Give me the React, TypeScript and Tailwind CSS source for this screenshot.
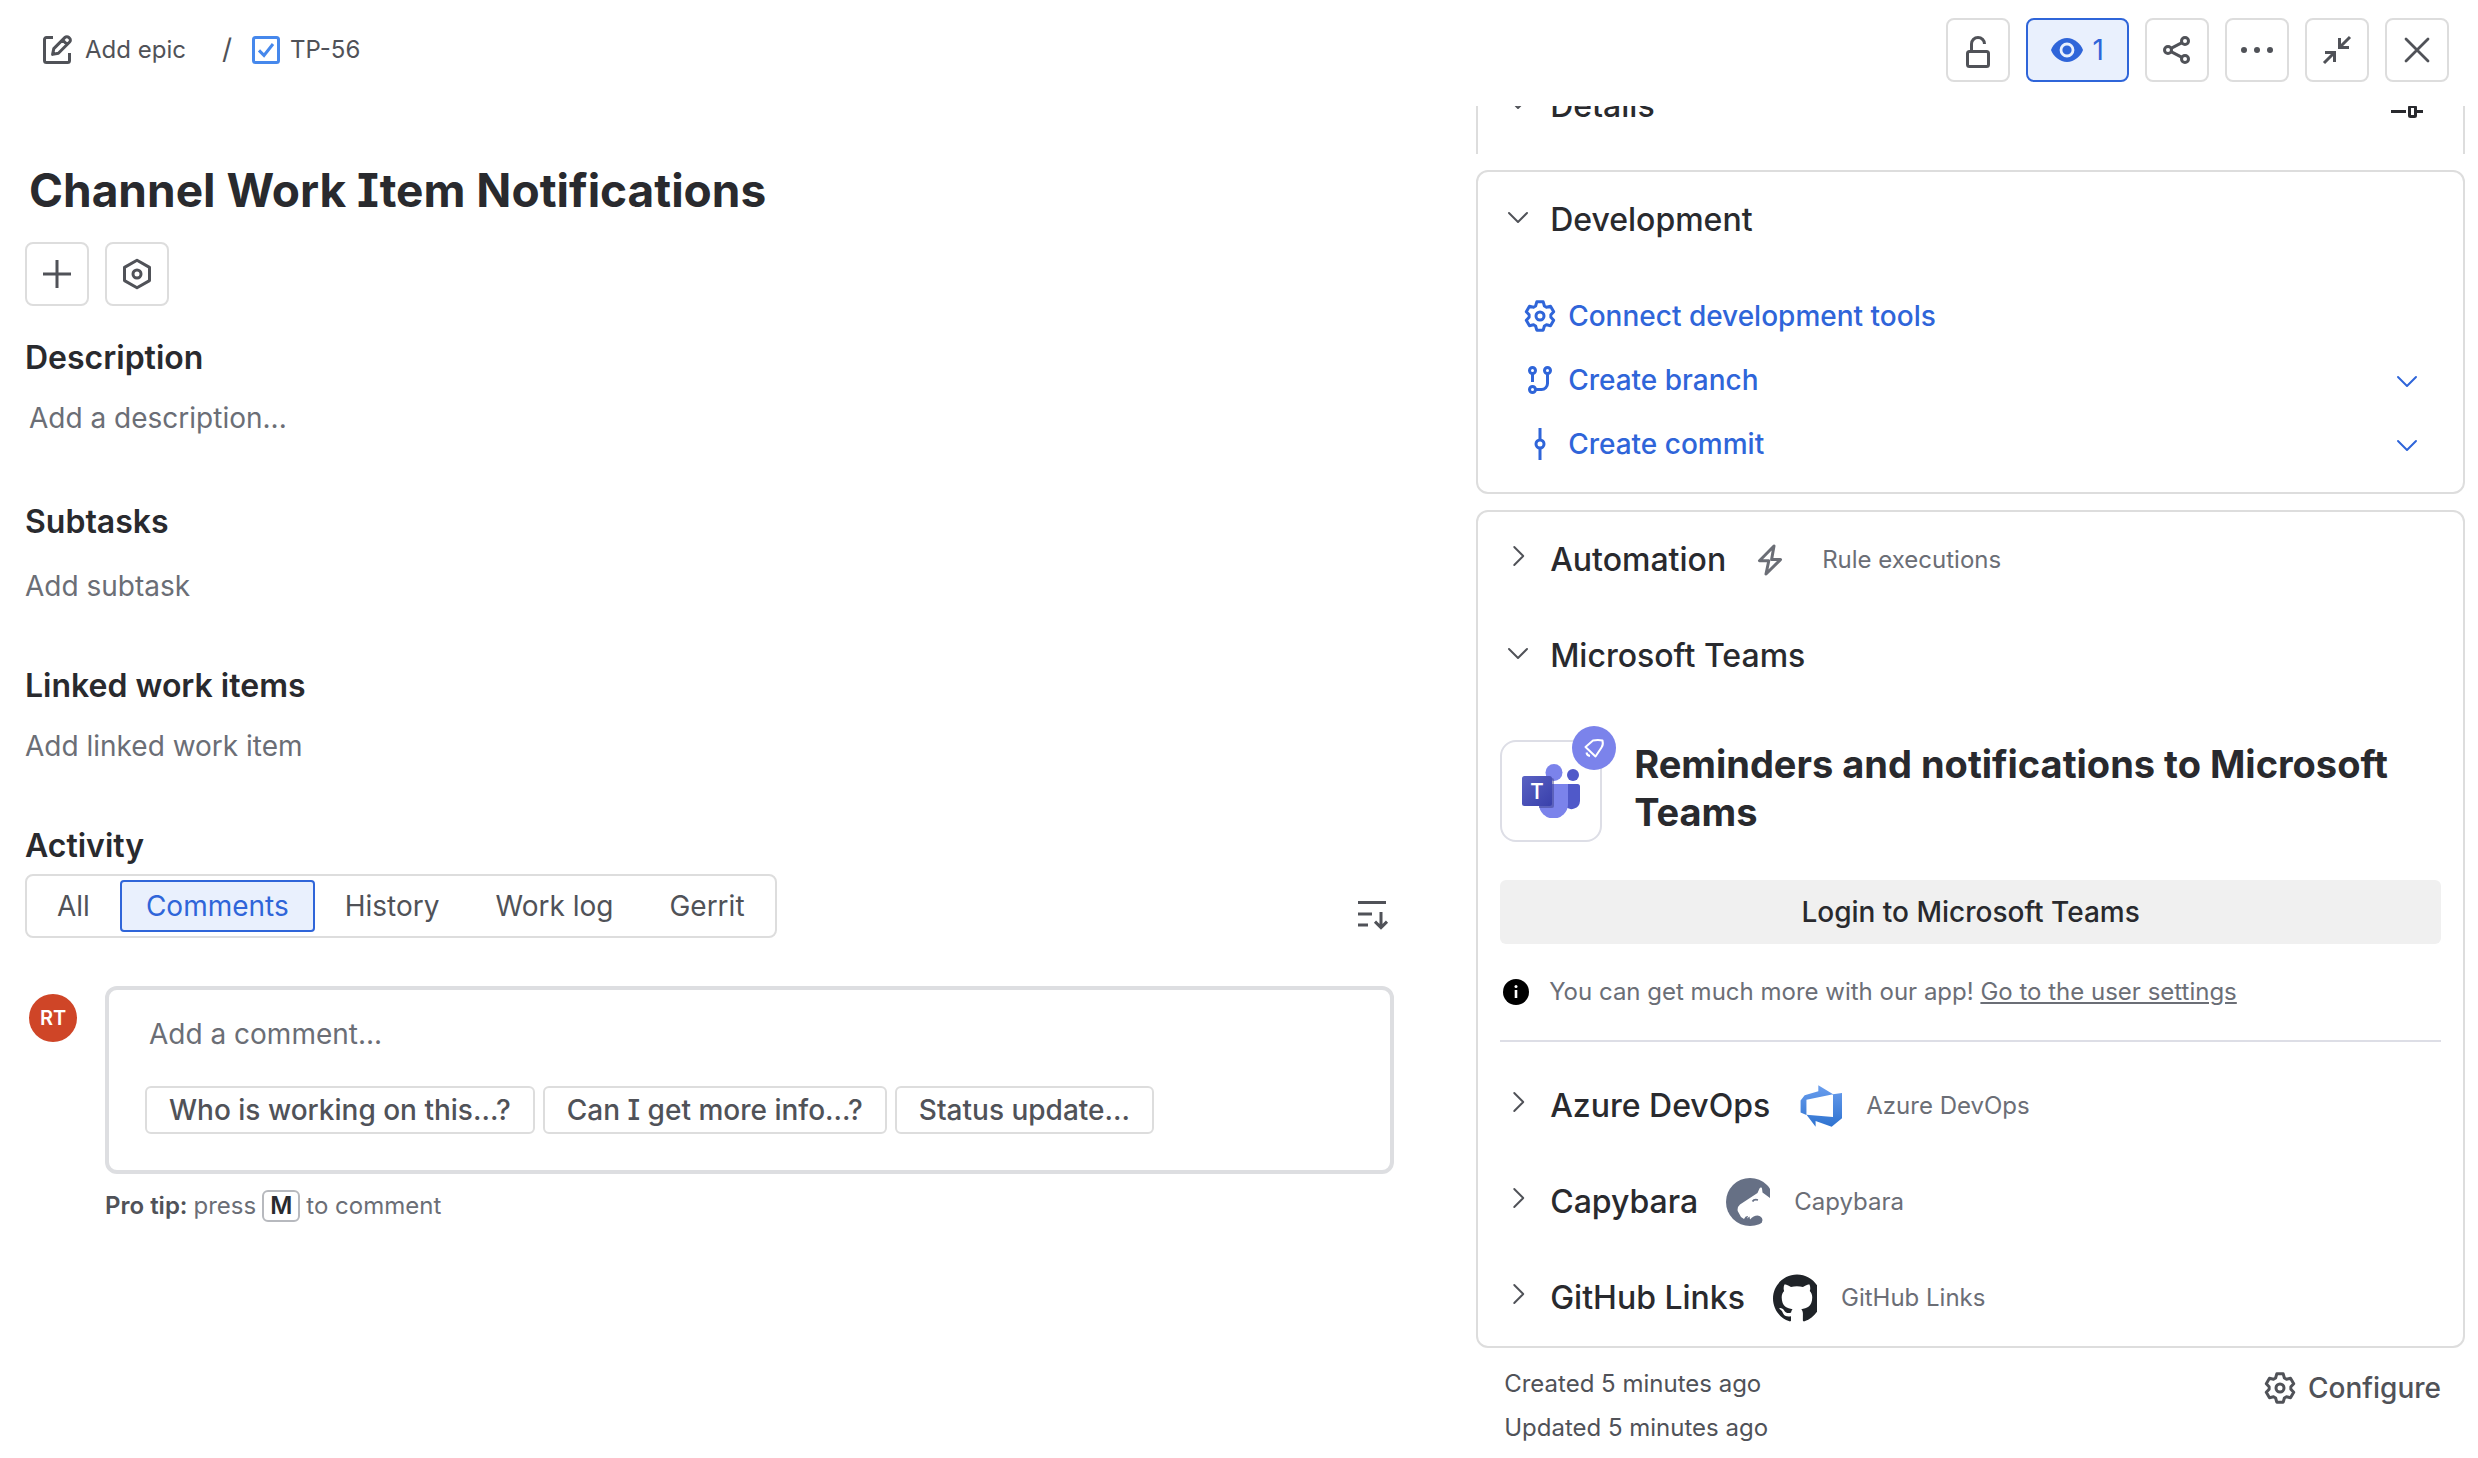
import React, { useState } from 'react';

interface IconProps {
  children: React.ReactNode;
  className?: string;
}

const Icon: React.FC<IconProps> = ({ children, className = 'size-8' }) => (
  <svg
    viewBox="0 0 16 16"
    fill="none"
    stroke="currentColor"
    strokeWidth="1.5"
    className={`shrink-0 overflow-visible ${className}`}
    aria-hidden="true"
  >
    {children}
  </svg>
);

const GearIcon = () => (
  <Icon>
    <path
      strokeLinejoin="round"
      d="M5.8 3L6.4.9h3.2l.6 2.1 1.03.6 2.03-.49 1.6 2.78-1.43 1.51v1.2l1.43 1.51-1.6 2.78-2.03-.49-1.03.6-.6 2.1H6.4L5.8 13l-1.03-.6-2.03.49-1.6-2.78L2.57 8.6V7.4L1.14 5.89l1.6-2.78 2.03.49z"
    />
    <circle cx="8" cy="8" r="2" />
  </Icon>
);

const ChevronDown = () => (
  <Icon className="size-6">
    <path d="M2 6l6 6 6-6" strokeWidth="1.3" strokeLinecap="round" strokeLinejoin="round" />
  </Icon>
);

const ChevronRight = () => (
  <Icon className="size-6">
    <path d="M5.5 2l6 6-6 6" strokeWidth="1.3" strokeLinecap="round" strokeLinejoin="round" />
  </Icon>
);

const TeamsLogo = () => (
  <svg viewBox="0 0 58 54" className="w-[58px]" aria-hidden="true">
    <defs>
      <linearGradient id="teams-tile" x1="0" y1="0" x2="1" y2="1">
        <stop offset="0" stopColor="#5a62c3" />
        <stop offset="1" stopColor="#3940ab" />
      </linearGradient>
    </defs>
    <circle cx="51" cy="11" r="6" fill="#5059c9" />
    <path d="M43 20h12.500a2.500 2.500 0 0 1 2.500 2.500V37a8.500 8.500 0 0 1-15 5z" fill="#5059c9" />
    <circle cx="32" cy="8.500" r="8.500" fill="#7b83eb" />
    <path d="M17 20h29v20a14.500 14.500 0 0 1-29 0z" fill="#7b83eb" />
    <path d="M17 14h13a2 2 0 0 1 2 2v26a2 2 0 0 1-2 2H17z" fill="#3b3f8c" opacity="0.5" />
    <rect y="12" width="30" height="30" rx="2.500" fill="url(#teams-tile)" />
    <text x="15" y="35" textAnchor="middle" fontSize="22" fontWeight="600" fill="#fff" fontFamily="Open Sans, sans-serif">
      T
    </text>
  </svg>
);

const AzureLogo = () => (
  <svg viewBox="0 0 17 18" className="h-12 w-11" aria-hidden="true">
    <defs>
      <linearGradient id="azure" x1="0" y1="0" x2="0" y2="1">
        <stop offset="0" stopColor="#6a9eee" />
        <stop offset="1" stopColor="#2f73d0" />
      </linearGradient>
    </defs>
    <path
      fill="url(#azure)"
      d="M17 4v9.740l-4 3.280-6.200-2.260V17l-3.510-4.590 10.230.8V4.440zm-3.410.49L7.850 1v2.290L2.580 4.840 1 6.870v4.610l2.260 1V6.570z"
    />
  </svg>
);

const CapybaraLogo = () => (
  <svg viewBox="0 0 44 48" className="h-12 w-11" aria-hidden="true">
    <circle cx="24" cy="24" r="24" fill="#667085" />
    <path
      fill="#fff"
      d="M48 22l-4-2-7.500-5.500L36 10.500c0-1.500-2-1.500-2.500 0L31.500 15 14 26.500q-3 2.500-2.300 6.500l3.300 6 3 2q1.500-3.500 4-3l-1 2.500 2.500-2 .5 3q3.500-4 7.500-4 4.500.5 5 4.500 0 3-3 5.500l14 3z"
    />
    <path d="M26.500 23.500q1.500-2.500 5.500-1.500" fill="none" stroke="#667085" strokeWidth="1.800" />
  </svg>
);

const GitHubLogo = () => (
  <svg viewBox="0 0 22 24" className="h-12 w-11" aria-hidden="true">
    <path
      fill="#1f2328"
      d="M12 .297c-6.630 0-12 5.373-12 12 0 5.303 3.438 9.800 8.205 11.385.6.113.82-.258.82-.577 0-.285-.01-1.040-.015-2.040-3.338.724-4.042-1.610-4.042-1.610C4.422 18.070 3.633 17.700 3.633 17.700c-1.087-.744.084-.729.084-.729 1.205.084 1.838 1.236 1.838 1.236 1.070 1.835 2.809 1.305 3.495.998.108-.776.417-1.305.76-1.605-2.665-.3-5.466-1.332-5.466-5.930 0-1.310.465-2.380 1.235-3.220-.135-.303-.54-1.523.105-3.176 0 0 1.005-.322 3.300 1.230.96-.267 1.980-.399 3-.405 1.020.006 2.040.138 3 .405 2.280-1.552 3.285-1.230 3.285-1.230.645 1.653.24 2.873.12 3.176.765.84 1.230 1.910 1.230 3.220 0 4.610-2.805 5.625-5.475 5.920.42.36.81 1.096.81 2.220 0 1.606-.015 2.896-.015 3.286 0 .315.21.69.825.57C20.565 22.092 24 17.592 24 12.297c0-6.627-5.373-12-12-12"
    />
  </svg>
);

interface IconButtonProps {
  label: string;
  children: React.ReactNode;
}

const IconButton: React.FC<IconButtonProps> = ({ label, children }) => (
  <button
    type="button"
    aria-label={label}
    className="flex size-16 items-center justify-center rounded-lg border-2 border-[#dddddd] text-[#505258]"
  >
    {children}
  </button>
);

interface PanelRowProps {
  title: string;
  open?: boolean;
  children?: React.ReactNode;
}

const PanelRow: React.FC<PanelRowProps> = ({ title, open = false, children }) => (
  <div className="flex h-24 shrink-0 items-center px-7">
    <button type="button" aria-expanded={open} className="flex items-center gap-5">
      <span className="pb-2 text-[#505258]">{open ? <ChevronDown /> : <ChevronRight />}</span>
      <span className="text-[32px] leading-10 font-medium">{title}</span>
    </button>
    {children}
  </div>
);

interface AppRowProps {
  title: string;
  label: string;
  icon: React.ReactNode;
}

const AppRow: React.FC<AppRowProps> = ({ title, label, icon }) => (
  <PanelRow title={title}>
    <span className="ml-7 flex w-11 shrink-0 text-[#6b6e76]">{icon}</span>
    <span className="ml-6 text-2xl text-[#6b6e76]">{label}</span>
  </PanelRow>
);

interface FieldProps {
  title: string;
  action: string;
  className: string;
  actionClassName?: string;
}

const Field: React.FC<FieldProps> = ({ title, action, className, actionClassName = '' }) => (
  <section className={`flex flex-col items-start ${className}`}>
    <h2 className="text-[32px] leading-10 font-semibold">{title}</h2>
    <button type="button" className={`text-[28px] leading-10 text-[#6b6e76] ${actionClassName}`}>
      {action}
    </button>
  </section>
);

const tabs = ['All', 'Comments', 'History', 'Work log', 'Gerrit'];
const suggestions = ['Who is working on this...?', 'Can I get more info...?', 'Status update...'];

const Header = () => (
  <header className="flex h-[106px] items-start justify-between pt-[18px] pr-[29px] pl-[41px]">
    <nav aria-label="Breadcrumbs" className="flex h-16 items-center text-2xl text-[#505258]">
      <button type="button" className="flex items-center gap-3">
        <Icon>
          <path d="M6 1.750H2.750a1 1 0 0 0-1 1v10.500a1 1 0 0 0 1 1h10.500a1 1 0 0 0 1-1V9.500" />
          <path
            strokeLinejoin="round"
            d="M5.800 10.200l.6-2.900L12 1.700a1.300 1.300 0 0 1 1.850 0l.45.45a1.300 1.300 0 0 1 0 1.850L8.700 9.600zM10.800 3l2.200 2.200"
          />
        </Icon>
        Add epic
      </button>
      <span className="ml-9 text-[28px]">/</span>
      <a href="#TP-56" className="ml-[18px] flex items-center gap-2">
        <Icon className="size-8 text-[#4688ec]">
          <rect x="1.750" y="1.750" width="12.500" height="12.500" rx="1" />
          <path d="M4.500 8.200l2.500 2.500L11.500 5" />
        </Icon>
        TP-56
      </a>
    </nav>
    <div className="flex gap-4">
      <IconButton label="Restrictions">
        <Icon>
          <rect x="2.750" y="8.750" width="10.500" height="7.500" rx="1" />
          <path d="M4.750 8.500V5a3.250 3.250 0 0 1 6.500 0" />
        </Icon>
      </IconButton>
      <button
        type="button"
        aria-label="Watching, 1 watcher"
        className="flex h-16 items-center gap-2.5 rounded-lg border-2 border-[#2f65d9] bg-[#e9f0fd] px-[23px] text-[28px] text-[#2f65d9]"
      >
        <Icon>
          <path d="M0 8C1 5 4.500 2 8 2s7 3 8 6c-1 3-4.500 6-8 6S1 11 0 8z" fill="currentColor" stroke="none" />
          <circle cx="8" cy="8" r="3" stroke="#e9f0fd" strokeWidth="1.400" />
        </Icon>
        1
      </button>
      <IconButton label="Share">
        <Icon>
          <circle cx="3.500" cy="8" r="1.750" />
          <circle cx="12" cy="3.500" r="1.750" />
          <circle cx="12" cy="12.500" r="1.750" />
          <path d="M5 7.200l5.500-2.900M5 8.800l5.500 2.900" />
        </Icon>
      </IconButton>
      <IconButton label="Actions">
        <Icon>
          <g fill="currentColor" stroke="none">
            <circle cx="1.500" cy="8" r="1.500" />
            <circle cx="8" cy="8" r="1.500" />
            <circle cx="14.500" cy="8" r="1.500" />
          </g>
        </Icon>
      </IconButton>
      <IconButton label="Collapse">
        <Icon>
          <path d="M14.500 1.500L9.250 6.750M9.250 2v4.750H14M1.500 14.500l5.250-5.250M2 9.250h4.750V14" />
        </Icon>
      </IconButton>
      <IconButton label="Close">
        <Icon>
          <path d="M2.500 2.500l11 11M13.500 2.500l-11 11" strokeLinecap="round" strokeWidth="1.400" />
        </Icon>
      </IconButton>
    </div>
  </header>
);

const Activity = () => {
  const [activeTab, setActiveTab] = useState('Comments');

  return (
    <section className="mt-15">
      <h2 className="text-[32px] leading-10 font-semibold">Activity</h2>
      <div className="mt-2 flex items-start justify-between">
        <div className="flex gap-1 rounded-lg border-2 border-[#dddddd] p-1">
          {tabs.map((tab) => (
            <button
              key={tab}
              type="button"
              aria-pressed={tab === activeTab}
              onClick={() => setActiveTab(tab)}
              className={`h-[52px] rounded-sm border-2 px-6 text-[28px] ${
                tab === activeTab
                  ? 'border-[#2f65d9] bg-[#e9f0fd] text-[#2f65d9]'
                  : 'border-transparent text-[#505258]'
              }`}
            >
              {tab}
            </button>
          ))}
        </div>
        <button type="button" aria-label="Newest first" className="mt-6 mr-1.5 text-[#505258]">
          <Icon>
            <path d="M1 2.250h14M1 8h7M1 13.500h5M12.500 7v7.500M9.500 11.800l3 3 3-3" />
          </Icon>
        </button>
      </div>

      <div className="mt-12 flex items-start">
        <div className="mt-2 ml-1 flex size-12 items-center justify-center rounded-full bg-[#cf4527] text-xl font-semibold text-white">
          RT
        </div>
        <div className="ml-7 flex-1">
          <div className="rounded-xl border-4 border-[#dddee1] px-9 pt-6 pb-9">
            <input
              type="text"
              aria-label="Add a comment"
              placeholder="Add a comment..."
              className="block h-10 w-full pl-1 text-[28px] placeholder:text-[#6b6e76]"
            />
            <div className="mt-8 flex gap-2">
              {suggestions.map((text) => (
                <button
                  key={text}
                  type="button"
                  className="h-12 rounded-md border-2 border-[#dddddd] px-[22px] text-[28px] leading-10 font-medium text-[#505258]"
                >
                  {text}
                </button>
              ))}
            </div>
          </div>
          <p className="mt-4 flex items-center gap-1.5 text-2xl text-[#6b6e76]">
            <strong className="font-semibold text-[#505258]">Pro tip:</strong>
            press
            <kbd className="rounded-md border-2 border-[#b7b9be] px-1.5 font-[Inter,sans-serif] leading-7 font-semibold text-[#292a2e]">
              M
            </kbd>
            to comment
          </p>
        </div>
      </div>
    </section>
  );
};

const Development = () => (
  <section className="mt-4 rounded-xl border-2 border-[#dddddd]">
    <PanelRow title="Development" open />
    <div className="pt-4 pr-11 pb-4 pl-[46px] text-[28px] font-medium text-[#2f65d9]">
      <a href="#connect" className="flex h-16 items-center gap-3">
        <GearIcon />
        Connect development tools
      </a>
      <div className="flex h-16 items-center justify-between">
        <a href="#branch" className="flex items-center gap-3">
          <Icon>
            <circle cx="4.250" cy="3.250" r="1.500" />
            <circle cx="11.750" cy="3.250" r="1.500" />
            <circle cx="4.250" cy="12.750" r="1.500" />
            <path d="M4.250 4.750V9M11.750 4.750v5a3 3 0 0 1-3 3h-3" />
          </Icon>
          Create branch
        </a>
        <button type="button" aria-label="Branch options">
          <ChevronDown />
        </button>
      </div>
      <div className="flex h-16 items-center justify-between">
        <a href="#commit" className="flex items-center gap-3">
          <Icon>
            <circle cx="8" cy="8" r="2" />
            <path d="M8 0v6M8 10v6" />
          </Icon>
          Create commit
        </a>
        <button type="button" aria-label="Commit options">
          <ChevronDown />
        </button>
      </div>
    </div>
  </section>
);

const TeamsPanel = () => (
  <div className="mx-[22px] border-b-2 border-[#dddee6] pt-9 pb-8">
    <div className="flex items-start">
      <div className="relative flex size-[102px] shrink-0 items-center justify-center rounded-2xl border-2 border-[#dddee6]">
        <TeamsLogo />
        <span className="absolute -top-4 -right-4 flex size-11 items-center justify-center rounded-full bg-[#7b83eb] text-white">
          <svg viewBox="-11 -11 22 22" fill="none" stroke="currentColor" strokeWidth="2" className="size-[22px]" aria-hidden="true">
            <path d="M-8.500-1L-1-7.500Q4-8.500 8.500-7.500 9.500-3 7.500-.5L1.500 8.500z" strokeLinejoin="round" />
            <path d="M-7.500 4.500q.5 3 3.500 3.500" />
          </svg>
        </span>
      </div>
      <h3 className="ml-8 text-[38px] leading-12 font-bold">
        Reminders and notifications to Microsoft Teams
      </h3>
    </div>
    <button type="button" className="mt-[38px] h-16 w-full rounded-md bg-[#f0f0f0] text-[28px] font-medium">
      Login to Microsoft Teams
    </button>
    <p className="mt-8 flex items-center text-2xl text-[#6b6e76]">
      <svg viewBox="0 0 26 26" className="mr-5 ml-[3px] size-[26px]" aria-hidden="true">
        <circle cx="13" cy="13" r="13" fill="#000" />
        <circle cx="13" cy="7.500" r="1.500" fill="#fff" />
        <path d="M13 11v8" stroke="#fff" strokeWidth="2.600" />
      </svg>
      <span>
        You can get much more with our app!{' '}
        <a href="#settings" className="underline">
          Go to the user settings
        </a>
      </span>
    </p>
  </div>
);

export default function App() {
  return (
    <div className="bg-white font-[Inter,sans-serif] text-[#292a2e] [font-feature-settings:'cv08']">
      <Header />
      <div className="grid grid-cols-[18fr_13fr] gap-x-[82px] pr-[13px] pl-[25px]">
        <main className="pt-14">
          <h1 className="pl-1 text-[46px] leading-14 font-bold">Channel Work Item Notifications</h1>
          <div className="mt-6 flex gap-4">
            <IconButton label="Add">
              <Icon>
                <path d="M8 1v14M1 8h14" />
              </Icon>
            </IconButton>
            <IconButton label="Apps">
              <Icon>
                <path d="M8 1.100l6.250 3.600v6.600L8 14.900l-6.250-3.600V4.700z" strokeLinejoin="round" />
                <circle cx="8" cy="8" r="2" />
              </Icon>
            </IconButton>
          </div>
          <Field title="Description" action="Add a description..." className="mt-8 gap-5" actionClassName="pl-1" />
          <Field title="Subtasks" action="Add subtask" className="mt-16 gap-6" />
          <Field title="Linked work items" action="Add linked work item" className="mt-15 gap-5" />
          <Activity />
        </main>

        <aside>
          <section className="flex h-12 flex-col justify-end overflow-hidden border-x-2 border-[#dddddd]">
            <PanelRow title="Details" open>
              <button type="button" aria-label="Configure fields" className="mr-3 ml-auto">
                <Icon>
                  <path d="M0 5h3M8 5h8M0 10.750h7.500M13 10.750h3" />
                  <rect x="3.750" y="2.750" width="3.500" height="4.500" rx=".5" />
                  <rect x="9.250" y="8.250" width="3" height="5" rx=".5" />
                </Icon>
              </button>
            </PanelRow>
          </section>

          <Development />

          <section className="mt-4 rounded-xl border-2 border-[#dddddd]">
            <AppRow
              title="Automation"
              label="Rule executions"
              icon={
                <Icon>
                  <path d="M10 1L2.750 8.400H7.400L6 15l7.250-7.200H8.800z" strokeLinejoin="round" />
                </Icon>
              }
            />
            <PanelRow title="Microsoft Teams" open />
            <TeamsPanel />
            <div className="pt-4">
              <AppRow title="Azure DevOps" label="Azure DevOps" icon={<AzureLogo />} />
              <AppRow title="Capybara" label="Capybara" icon={<CapybaraLogo />} />
              <AppRow title="GitHub Links" label="GitHub Links" icon={<GitHubLogo />} />
            </div>
          </section>

          <footer className="flex items-start justify-between pt-3.5 pr-6 pb-2 pl-7 text-[#505258]">
            <div className="text-2xl leading-11">
              <p>Created 5 minutes ago</p>
              <p>Updated 5 minutes ago</p>
            </div>
            <button type="button" className="mt-1.5 flex items-center gap-3 text-[28px] leading-10 font-medium">
              <GearIcon />
              Configure
            </button>
          </footer>
        </aside>
      </div>
    </div>
  );
}
